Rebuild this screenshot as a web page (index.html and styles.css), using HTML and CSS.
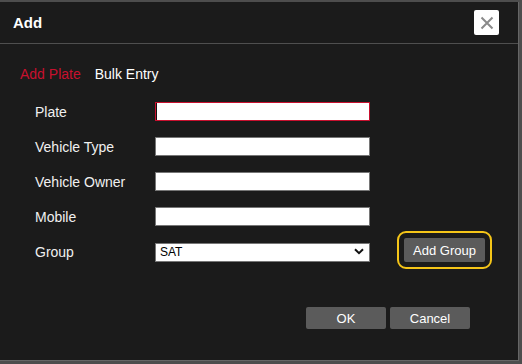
FILE: index.html
```html
<!DOCTYPE html>
<html lang="en">
<head>
    <meta charset="UTF-8">
    <title>Add</title>
    <link rel="stylesheet" href="styles.css">
</head>
<body>
    <div class="dialog">
        <div class="header">
            <h2>Add</h2>
            <button class="close" type="button">
                <svg width="14" height="14" viewBox="0 0 14 14">
                    <path d="M1.5 1.5 L12.5 12.5 M12.5 1.5 L1.5 12.5" stroke="#8a8a8a" stroke-width="2" fill="none"/>
                </svg>
            </button>
        </div>

        <div class="tabs">
            <span class="tab active">Add Plate</span>
            <span class="tab">Bulk Entry</span>
        </div>

        <div class="form">
            <label>Plate</label>
            <input type="text" class="focused">

            <label>Vehicle Type</label>
            <input type="text">

            <label>Vehicle Owner</label>
            <input type="text">

            <label>Mobile</label>
            <input type="text">

            <label>Group</label>
            <div class="select-wrap">
                <select>
                    <option>SAT</option>
                </select>
                <svg class="chevron" width="10" height="7" viewBox="0 0 10 7">
                    <path d="M1 1.2 L5 5.2 L9 1.2" stroke="#111" stroke-width="2" fill="none"/>
                </svg>
            </div>
            <button class="btn add-group" type="button">Add Group</button>
        </div>

        <div class="footer">
            <button class="btn" type="button">OK</button>
            <button class="btn" type="button">Cancel</button>
        </div>
    </div>
</body>
</html>
```

FILE: styles.css
```css
body {
    margin: 0;
    background: #4d4d4d;
    font-family: "Liberation Sans", Arial, sans-serif;
    overflow: hidden;
}

.dialog {
    width: 518px;
    height: 358px;
    margin-top: 2px;
    background: #1b1b1b;
    border-right: 1px solid #666;
    border-bottom: 1px solid #666;
}

.header {
    height: 41px;
    display: flex;
    align-items: center;
    justify-content: space-between;
    padding: 0 19px 0 13px;
    border-bottom: 1px solid #4f4f4f;
}

h2 {
    margin: 0;
    color: #fff;
    font-size: 15px;
    font-weight: bold;
}

.close {
    width: 25px;
    height: 25px;
    padding: 0;
    border: none;
    border-radius: 2px;
    background: #fff;
    display: flex;
    align-items: center;
    justify-content: center;
}

.tabs {
    display: flex;
    gap: 14px;
    margin-top: 22px;
    padding-left: 20px;
    font-size: 14px;
    line-height: 16px;
}

.tab {
    color: #fff;
}

.tab.active {
    color: #c8102e;
}

.form {
    display: grid;
    grid-template-columns: 120px 215px auto;
    row-gap: 16px;
    align-items: center;
    margin-top: 20px;
    padding-left: 35px;
}

label {
    grid-column: 1;
    color: #f0f0f0;
    font-size: 14px;
    line-height: 16px;
}

input {
    grid-column: 2;
    width: 100%;
    height: 19px;
    box-sizing: border-box;
    border: 1px solid #767676;
    background: #fff;
    padding: 0 4px;
    outline: none;
}

input.focused {
    border-color: #c8102e;
    box-shadow: inset 1px 0 0 #111;
}

.select-wrap {
    grid-column: 2;
    position: relative;
    height: 19px;
}

select {
    appearance: none;
    -webkit-appearance: none;
    width: 100%;
    height: 19px;
    box-sizing: border-box;
    border: 1px solid #767676;
    border-radius: 0;
    background: #fff;
    padding: 0 4px;
    font-family: "Liberation Sans", Arial, sans-serif;
    font-size: 12px;
    color: #000;
}

.chevron {
    position: absolute;
    right: 6px;
    top: 6px;
    pointer-events: none;
}

.btn {
    width: 80px;
    height: 22px;
    padding: 0;
    border: none;
    border-radius: 2px;
    background: #5b5b5b;
    color: #fff;
    font-family: "Liberation Sans", Arial, sans-serif;
    font-size: 13px;
}

.add-group {
    grid-column: 3;
    width: 81px;
    height: 24px;
    margin: -4px 0 -1px 34px;
    outline: 2px solid #f5c518;
    outline-offset: 5px;
}

.footer {
    display: flex;
    justify-content: flex-end;
    gap: 4px;
    margin-top: 46px;
    padding-right: 48px;
}
```
